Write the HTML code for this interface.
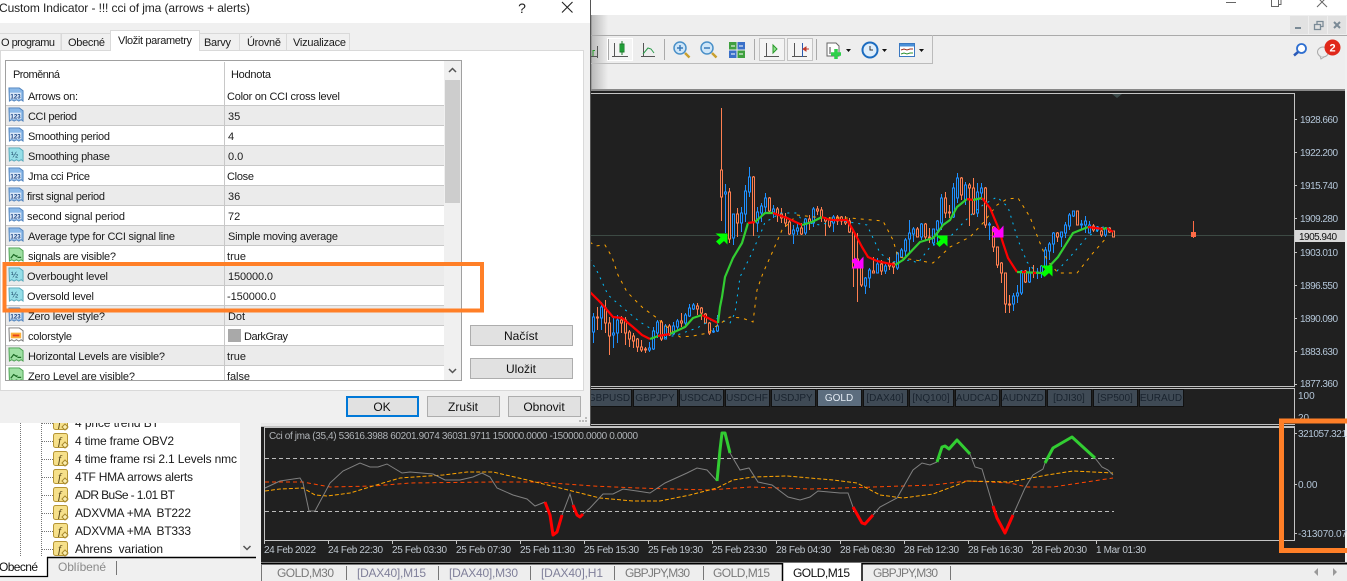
<!DOCTYPE html>
<html><head><meta charset="utf-8"><title>Custom Indicator</title>
<style>
html,body{margin:0;padding:0;background:#fff;width:1347px;height:581px;overflow:hidden}
svg{display:block;font-family:"Liberation Sans",sans-serif}
.d{font-size:11px;fill:#1a1a1a}
.ax{font-size:10px;fill:#b4c6d8}
.dt{font-size:10px;fill:#c0c8d0}
.tb{font-size:12px;fill:#7a7a7a}
.tx{font-size:10px;fill:#19232e;text-anchor:middle}
.tr{font-size:12px;fill:#1a1a1a;white-space:pre}
.btn{fill:#e1e1e1;stroke:#adadad}
.bt{font-size:12px;fill:#111;text-anchor:middle}
</style></head><body>
<svg width="1347" height="581" viewBox="0 0 1347 581" xmlns="http://www.w3.org/2000/svg">
<defs>
<linearGradient id="sh" x1="0" x2="1" y1="0" y2="0"><stop offset="0" stop-color="#555"/><stop offset=".12" stop-color="#bbb"/><stop offset="1" stop-color="#bbb" stop-opacity="0"/></linearGradient>
<symbol id="i123" viewBox="0 0 17 17"><path d="M1 1h11l4 3v11l-2-1.500-2.500 1.500-2.500-1.500-2.500 1.500-2.500-1.500-2.500 1.500z" fill="#8ab8e8" stroke="#4f82bc"/><rect x="2" y="6" width="12" height="7" fill="#dbe8f7"/><text x="8" y="12" font-size="6.500" font-weight="bold" fill="#143e80" text-anchor="middle">123</text></symbol>
<symbol id="i12" viewBox="0 0 17 17"><path d="M1 1h11l4 3v11l-2-1.500-2.500 1.500-2.500-1.500-2.500 1.500-2.500-1.500-2.500 1.500z" fill="#96dee8" stroke="#55a8ba"/><text x="7" y="11" font-size="9" fill="#1f4a6a" text-anchor="middle">½</text></symbol>
<symbol id="ib" viewBox="0 0 17 17"><path d="M1 1h11l4 3v11l-2-1.500-2.500 1.500-2.500-1.500-2.500 1.500-2.500-1.500-2.500 1.500z" fill="#9fe0a4" stroke="#4aa050"/><path d="M3 12l3-4 3 2 1-1M10 11h4" fill="none" stroke="#1d6a25" stroke-width="1.300"/></symbol>
<symbol id="ic" viewBox="0 0 17 17"><path d="M1 1h11l4 3v11l-2-1.500-2.500 1.500-2.500-1.500-2.500 1.500-2.500-1.500-2.500 1.500z" fill="#fff" stroke="#777"/><rect x="3" y="6" width="11" height="6" fill="#fbb03b"/><rect x="5" y="8" width="7" height="2" fill="#e8401c"/></symbol>
<symbol id="fx" viewBox="0 0 16 16"><rect x=".5" y=".5" width="14" height="14" rx="2" fill="#f6e08a" stroke="#b59535"/><text x="6.500" y="11.500" font-size="11" font-style="italic" font-family="Liberation Serif" fill="#4a3a10" text-anchor="middle">f</text><path d="M12 9l3 3-3 3-3-3z" fill="#fbeeb0" stroke="#a88a2c"/></symbol>
</defs>

<!-- app background -->
<rect width="1347" height="581" fill="#fff"/>
<rect x="590" y="15" width="757" height="75" fill="#eee"/>
<rect x="590" y="15" width="18" height="75" fill="url(#sh)"/>
<path d="M590 35.500H1347" stroke="#aaa"/>
<path d="M1226 2.500h10M1271.500 0v6.500h7V0M1278.500 4.500h2.500V0" fill="none" stroke="#666"/>
<path d="M1319-1l8 8M1325-1l-8 8" fill="none" stroke="#666"/>
<rect x="1290" y="16" width="18" height="18" fill="#e2e2e2"/><rect x="1309" y="16" width="18" height="18" fill="#e2e2e2"/><rect x="1328" y="16" width="18" height="18" fill="#e2e2e2"/>
<path d="M1295 28h6" stroke="#7a8a96" stroke-width="2"/>
<path d="M1314.500 24.500h6v5h-6zM1317 24v-2.500h6v5h-2.500" fill="none" stroke="#7a8a96" stroke-width="1.300"/>
<path d="M1334 22l6 6M1340 22l-6 6" stroke="#7a8a96" stroke-width="2"/>
<!-- toolbar -->
<path d="M590 63.500H932.500V35" fill="none" stroke="#bbb"/>
<rect x="607.500" y="38.500" width="25" height="22" fill="#f4f4f4" stroke="#fff"/>
<rect x="759.500" y="38.500" width="25" height="22" fill="#f4f4f4" stroke="#c4c4c4"/>
<rect x="787.500" y="38.500" width="25" height="22" fill="#f4f4f4" stroke="#c4c4c4"/>
<path d="M664.500 39V60M754.500 39V60M816.500 39V60M608.500 39V60" stroke="#aaa"/>
<path d="M590 56.500h3v-6h2" fill="none" stroke="#2a9a2a"/><path d="M590 56.500h8M597.500 46v12" fill="none" stroke="#555"/>
<g fill="none" stroke="#555">
<path d="M614.500 43V57M612 56.500H628"/><path d="M643.500 43V57M641 56.500H655"/>
<path d="M766.500 43V57M764 56.500H779"/><path d="M794.500 43V57M792 56.500H807"/><path d="M802.500 43V57" stroke="#2a5ab0"/>
</g>
<rect x="620" y="44" width="4" height="8" fill="#27c044" stroke="#1a7a2a"/><path d="M622 41v14" stroke="#1a7a2a"/>
<path d="M643 54l5-6 3 1 3 4" fill="none" stroke="#2a9a4a"/>
<path d="M773 45v8l4-4z" fill="#8fe08f" stroke="#2a9a2a"/>
<path d="M809 49h-4M803 49l3-2v4z" fill="#c0392b" stroke="#c0392b"/>
<g>
<circle cx="680" cy="48" r="6" fill="#cfe6f8" stroke="#4a90c8" stroke-width="1.500"/><path d="M677 48h6M680 45v6" stroke="#3a7ab8" stroke-width="1.500"/><path d="M685 53l4.500 4.500" stroke="#c8a030" stroke-width="2.500"/>
<circle cx="707" cy="48" r="6" fill="#cfe6f8" stroke="#4a90c8" stroke-width="1.500"/><path d="M704 48h6" stroke="#3a7ab8" stroke-width="1.500"/><path d="M712 53l4.500 4.500" stroke="#c8a030" stroke-width="2.500"/>
<rect x="729" y="42" width="7.500" height="7.500" fill="#3fa03f"/><rect x="737.500" y="42" width="7.500" height="7.500" fill="#3a70c8"/><rect x="729" y="50.500" width="7.500" height="7.500" fill="#3a70c8"/><rect x="737.500" y="50.500" width="7.500" height="7.500" fill="#3fa03f"/>
<path d="M731 46h4M739 46h4M731 54h4M739 54h4" stroke="#fff"/>
</g>
<path d="M827 43h9l3 3v10h-12z" fill="#fff" stroke="#666"/><path d="M830 47v7" stroke="#444"/><path d="M836 49v10M831 54h10" stroke="#2ed04a" stroke-width="3.500"/>
<circle cx="870" cy="50" r="7.500" fill="#dfeefb" stroke="#1c6cc0" stroke-width="2"/><path d="M870 46v4h3" fill="none" stroke="#333"/>
<rect x="899.500" y="43.500" width="15" height="13" fill="#fff" stroke="#3a78c0"/><rect x="900" y="44" width="14" height="2.500" fill="#4a90d8"/><path d="M901 50l3-1 3 1 3-1 3 0" fill="none" stroke="#a03020"/><path d="M901 54l3-1 3 1 3-1 3 0" fill="none" stroke="#309030"/>
<path d="M846 49h5l-2.500 3zM882 49h5l-2.500 3zM919 49h5l-2.500 3z" fill="#111"/>
<!-- search and chat -->
<circle cx="1301.500" cy="48.500" r="4.500" fill="#fff" stroke="#2f6fd0" stroke-width="1.800"/><path d="M1298 52l-4 3.500" stroke="#2a5ab8" stroke-width="2.500"/>
<ellipse cx="1323" cy="52" rx="5.500" ry="5" fill="#eee" stroke="#aaa"/><path d="M1320 56l1 3 3-2" fill="#ddd" stroke="#aaa"/>
<circle cx="1332.500" cy="47.500" r="8" fill="#e0281a"/><text x="1332.500" y="51.500" font-size="11" font-weight="bold" fill="#fff" text-anchor="middle">2</text>

<!-- chart area -->
<rect x="590" y="91" width="755" height="2" fill="#202020"/>
<rect x="261" y="93" width="1084" height="469" fill="#202020"/>
<rect x="1345" y="36" width="2" height="527" fill="#f0f0f0"/>
<rect x="590" y="89" width="755" height="2" fill="#888"/>
<path d="M590 93.500H1294.500V387" fill="none" stroke="#c4c4c4"/>
<path d="M1112 94h10l-5 4z" fill="#3c4a4a"/>
<path d="M590 386.500H1295M590 388.500H1295M590 424.500H1295" stroke="#c0c0c0"/>
<path d="M261 426.500H1295" stroke="#c0c0c0"/>
<path d="M264.500 427.500H1294.500V540.500H264.500z" fill="none" stroke="#c4c4c4"/>
<path d="M1294.500 389V423" stroke="#c4c4c4"/>
<path d="M590 235.500H1294" stroke="#3d4a44"/>
<!-- price axis -->
<path d="M1294 119.500h3M1294 152.500h3M1294 185.500h3M1294 218.500h3M1294 252.500h3M1294 285.500h3M1294 318.500h3M1294 351.500h3M1294 384.500h3M1294 433.500h3M1294 484.500h3M1294 533.500h3" stroke="#c4c4c4"/>
<g class="ax">
<text class="ax" x="1300" y="123" textLength="38">1928.660</text>
<text class="ax" x="1300" y="156" textLength="38">1922.200</text>
<text class="ax" x="1300" y="189" textLength="38">1915.740</text>
<text class="ax" x="1300" y="222" textLength="38">1909.280</text>
<text class="ax" x="1300" y="256" textLength="38">1903.010</text>
<text class="ax" x="1300" y="289" textLength="38">1896.550</text>
<text class="ax" x="1300" y="322" textLength="38">1890.090</text>
<text class="ax" x="1300" y="355" textLength="38">1883.630</text>
<text class="ax" x="1300" y="387" textLength="38">1877.360</text>
<text class="ax" x="1298" y="399">100</text>
<text class="ax" x="1298" y="421">20</text>
<text class="ax" x="1298" y="437" textLength="49">321057.321</text>
<text class="ax" x="1298" y="488">0.00</text>
<text class="ax" x="1298" y="537" textLength="49">-313070.07</text>
</g>
<rect x="1295" y="230" width="50" height="12" fill="#d8d8d8"/>
<text x="1299" y="240" font-size="10" fill="#111" textLength="38">1905.940</text>

<!-- candles -->
<g fill="#202020" shape-rendering="crispEdges">
<path fill="none" stroke="#1e90ff" d="M593.500 313V343M601.500 302V330M613.500 317V348M617.500 315V343M649.500 342V352M653.500 327V350M657.500 320V338M665.500 324V339M673.500 322V335M677.500 319V330M685.500 313V325M689.500 304V317M693.500 303V310M713.500 328V333M717.500 315V332M725.500 184V233M733.500 214V245M741.500 207V232M745.500 185V222M749.500 167V197M757.500 207V232M761.500 203V222M765.500 193V213M773.500 205V218M793.500 225V244M797.500 223V235M805.500 218V235M813.500 207V227M833.500 215V232M865.500 277V294M869.500 268V288M877.500 258V273M885.500 263V274M897.500 252V270M901.500 248V258M905.500 238V257M909.500 220V252M913.500 227V242M921.500 223V240M933.500 229V245M937.500 220V243M941.500 194V230M953.500 183V218M957.500 173V203M965.500 182V205M977.500 183V217M981.500 183V200M989.500 222V240M1013.500 293V311M1017.500 285V303M1021.500 270V295M1029.500 267V283M1037.500 268V279M1041.500 265V278M1045.500 247V272M1049.500 242V260M1053.500 232V253M1061.500 232V247M1065.500 222V238M1069.500 213V230M1073.500 211V217M1081.500 220V230M1085.500 216V233M1089.500 221V233M1097.500 226V232M1105.500 227V237"/>
<path stroke="#1e90ff" d="M592.500 317h2V332h-2zM600.500 307h2V318h-2zM612.500 333h2V335h-2zM616.500 320h2V333h-2zM648.500 348h2V350h-2zM652.500 331h2V349h-2zM656.500 322h2V333h-2zM664.500 326h2V339h-2zM672.500 326h2V334h-2zM676.500 321h2V327h-2zM684.500 315h2V323h-2zM688.500 308h2V316h-2zM692.500 305h2V309h-2zM712.500 331h2V332h-2zM716.500 326h2V331h-2zM724.500 192h2V194h-2zM732.500 214h2V238h-2zM740.500 213h2V223h-2zM744.500 191h2V214h-2zM748.500 177h2V192h-2zM756.500 212h2V223h-2zM760.500 206h2V213h-2zM764.500 198h2V207h-2zM772.500 209h2V212h-2zM792.500 230h2V234h-2zM796.500 228h2V231h-2zM804.500 219h2V233h-2zM812.500 209h2V223h-2zM832.500 217h2V223h-2zM864.500 278h2V286h-2zM868.500 270h2V278h-2zM876.500 264h2V273h-2zM884.500 266h2V271h-2zM896.500 253h2V268h-2zM900.500 250h2V257h-2zM904.500 240h2V251h-2zM908.500 233h2V239h-2zM912.500 229h2V234h-2zM920.500 224h2V237h-2zM932.500 229h2V243h-2zM936.500 221h2V230h-2zM940.500 198h2V223h-2zM952.500 188h2V217h-2zM956.500 178h2V198h-2zM964.500 185h2V200h-2zM976.500 192h2V213h-2zM980.500 188h2V193h-2zM988.500 224h2V225h-2zM1012.500 296h2V304h-2zM1016.500 293h2V296h-2zM1020.500 271h2V293h-2zM1028.500 273h2V282h-2zM1036.500 272h2V273h-2zM1040.500 266h2V273h-2zM1044.500 250h2V267h-2zM1048.500 244h2V251h-2zM1052.500 233h2V244h-2zM1060.500 232h2V237h-2zM1064.500 225h2V233h-2zM1068.500 215h2V226h-2zM1072.500 211h2V216h-2zM1080.500 224h2V225h-2zM1084.500 221h2V225h-2zM1088.500 225h2V233h-2zM1096.500 227h2V230h-2zM1104.500 228h2V235h-2z"/>
<path fill="none" stroke="#ff7f50" d="M597.500 307V330M605.500 300V333M609.500 317V355M621.500 316V333M625.500 317V345M629.500 330V347M633.500 333V348M637.500 338V352M641.500 340V352M645.500 347V353M661.500 320V341M669.500 324V336M681.500 313V327M697.500 303V315M701.500 307V320M705.500 313V323M709.500 322V335M721.500 108V221M729.500 188V243M737.500 208V237M753.500 176V236M769.500 197V213M777.500 207V222M781.500 208V223M785.500 213V227M789.500 220V235M801.500 223V235M809.500 215V230M817.500 206V215M821.500 207V222M825.500 217V236M829.500 217V228M837.500 215V225M841.500 216V225M845.500 216V225M849.500 218V233M853.500 232V287M857.500 233V302M861.500 268V287M873.500 257V273M881.500 260V275M889.500 257V270M893.500 262V274M917.500 227V237M925.500 223V240M929.500 228V243M945.500 192V218M949.500 205V218M961.500 177V200M969.500 183V226M973.500 178V215M985.500 187V228M993.500 226V252M997.500 247V268M1001.500 262V283M1005.500 273V313M1009.500 295V313M1025.500 270V283M1033.500 265V278M1057.500 232V242M1077.500 211V225M1093.500 224V232M1101.500 227V237M1109.500 227V233M1113.500 231V237"/>
<path stroke="#ff7f50" d="M596.500 317h2V318h-2zM604.500 308h2V323h-2zM608.500 323h2V336h-2zM620.500 320h2V323h-2zM624.500 320h2V333h-2zM628.500 332h2V339h-2zM632.500 336h2V341h-2zM636.500 339h2V347h-2zM640.500 347h2V350h-2zM644.500 349h2V350h-2zM660.500 322h2V339h-2zM668.500 326h2V335h-2zM680.500 321h2V323h-2zM696.500 306h2V309h-2zM700.500 308h2V313h-2zM704.500 314h2V323h-2zM708.500 323h2V333h-2zM720.500 170h2V197h-2zM728.500 192h2V239h-2zM736.500 214h2V223h-2zM752.500 177h2V222h-2zM768.500 198h2V211h-2zM776.500 209h2V215h-2zM780.500 214h2V218h-2zM784.500 217h2V223h-2zM788.500 222h2V234h-2zM800.500 228h2V234h-2zM808.500 219h2V222h-2zM816.500 209h2V211h-2zM820.500 210h2V218h-2zM824.500 218h2V221h-2zM828.500 220h2V226h-2zM836.500 217h2V221h-2zM840.500 217h2V221h-2zM844.500 220h2V223h-2zM848.500 221h2V232h-2zM852.500 232h2V268h-2zM856.500 259h2V267h-2zM860.500 268h2V285h-2zM872.500 271h2V273h-2zM880.500 264h2V271h-2zM888.500 264h2V266h-2zM892.500 263h2V267h-2zM916.500 229h2V237h-2zM924.500 224h2V237h-2zM928.500 237h2V238h-2zM944.500 198h2V213h-2zM948.500 212h2V213h-2zM960.500 178h2V195h-2zM968.500 185h2V188h-2zM972.500 188h2V214h-2zM984.500 188h2V225h-2zM992.500 227h2V247h-2zM996.500 247h2V265h-2zM1000.500 263h2V273h-2zM1004.500 273h2V304h-2zM1008.500 304h2V305h-2zM1024.500 271h2V282h-2zM1032.500 272h2V273h-2zM1056.500 233h2V237h-2zM1076.500 211h2V225h-2zM1092.500 226h2V230h-2zM1100.500 231h2V235h-2zM1108.500 228h2V232h-2zM1112.500 231h2V237h-2z"/>
<path fill="none" stroke="#ff6a45" d="M1193.500 221V238"/><rect x="1191" y="232" width="5" height="5" fill="#ff6a45" stroke="none"/>
</g>
<!-- MA envelopes -->
<g fill="none">
<polyline stroke="#00bfff" stroke-dasharray="2 5" points="590,259 598,273 608,295 623,308 640,322 653,330 657,333 663,338 677,335 697,328 715,318 730,323 735,313 740,277 750,257 762,230 765,222 773,218 780,213 797,213 803,222 820,225 837,220 867,225 880,253 892,262 910,260 918,263 930,247 950,237 963,223 973,213 983,205 997,197 1008,207 1018,240 1027,262 1037,273 1057,271 1070,257 1087,237 1103,227 1110,228"/>
<polyline stroke="#ffa500" stroke-dasharray="3 5" points="590,242 595,246 605,245 612,257 618,275 627,292 643,308 657,318 667,327 680,337 693,336 708,333 715,327 730,317 742,318 753,322 757,290 763,273 772,253 782,230 797,215 823,218 850,218 883,221 893,240 898,257 915,260 933,263 950,247 970,237 983,223 997,205 1007,199 1018,198 1030,217 1038,238 1047,260 1058,273 1077,273 1093,253 1107,237"/>
<g stroke-width="2.200" stroke-linejoin="round">
<polyline stroke="#f00" points="590,292 600,302 607,310 613,317 622,318 633,327 642,335 650,339"/>
<polyline stroke="#32cd32" points="650,339 658,336"/><polyline stroke="#f00" points="658,336 670,334"/>
<polyline stroke="#32cd32" points="670,334 685,327 693,318 702,315"/><polyline stroke="#f00" points="702,315 718,323"/>
<polyline stroke="#32cd32" points="718,323 720,307 722,297 725,277 733,258 742,243 748,223"/><polyline stroke="#f00" points="748,223 755,222"/>
<polyline stroke="#32cd32" points="755,222 765,213 773,213"/><polyline stroke="#f00" points="773,213 787,218 802,225"/>
<polyline stroke="#32cd32" points="802,225 812,222 822,217"/><polyline stroke="#f00" points="822,217 830,220 847,220 853,230 862,247 868,257 877,261 895,265"/>
<polyline stroke="#32cd32" points="895,265 903,260 920,242 930,239 933,238 938,232 943,225 950,220 957,207 967,199"/><polyline stroke="#f00" points="967,199 973,200"/>
<polyline stroke="#32cd32" points="973,200 982,198"/><polyline stroke="#f00" points="982,198 990,208 998,227 1003,243 1008,258 1017,272"/>
<polyline stroke="#32cd32" points="1017,272 1043,273"/><path stroke="#f00" d="M1022 272h4M1033 273h3"/>
<polyline stroke="#32cd32" points="1043,273 1058,257 1073,233 1088,227"/><polyline stroke="#f00" points="1088,227 1103,229"/>
<polyline stroke="#32cd32" points="1103,229 1107,228"/><polyline stroke="#f00" points="1107,228 1113,232"/>
</g>
</g>
<!-- arrows -->
<g fill="#00ff00">
<path d="M715.500 233.500h12v11l-3.500-3.500-4.500 4-3.500-3.500 4.500-4z"/>
<path d="M935.500 235.500h12v11l-3.500-3.500-4.500 4-3.500-3.500 4.500-4z"/>
<path d="M1040.500 265.500h12v11l-3.500-3.500-4.500 4-3.500-3.500 4.500-4z"/>
</g>
<g fill="#ff00ff">
<path d="M863.500 256.500V268.500H851.500L855 265 851.500 261 855 257.500 859 261.500z"/>
<path d="M1003.500 225.500V237.500H991.500L995 234 991.500 230 995 226.500 999 230.500z"/>
</g>
<!-- symbol buttons -->
<g shape-rendering="crispEdges" stroke="#111">
<rect x="590" y="389.500" width="41.500" height="17" fill="#3f4a55"/><rect x="633.500" y="389.500" width="44" height="17" fill="#3f4a55"/><rect x="679.500" y="389.500" width="44" height="17" fill="#3f4a55"/><rect x="725.500" y="389.500" width="44" height="17" fill="#3f4a55"/><rect x="771.500" y="389.500" width="44" height="17" fill="#3f4a55"/><rect x="817.500" y="389.500" width="44" height="17" fill="#5c6d7e"/><rect x="863.500" y="389.500" width="44" height="17" fill="#3f4a55"/><rect x="909.500" y="389.500" width="44" height="17" fill="#3f4a55"/><rect x="955.500" y="389.500" width="44" height="17" fill="#3f4a55"/><rect x="1001.500" y="389.500" width="44" height="17" fill="#3f4a55"/><rect x="1047.500" y="389.500" width="44" height="17" fill="#3f4a55"/><rect x="1093.500" y="389.500" width="44" height="17" fill="#3f4a55"/><rect x="1139.500" y="389.500" width="44" height="17" fill="#3f4a55"/>
</g>
<text class="tx" x="609" y="401">GBPUSD</text><text class="tx" x="655" y="401">GBPJPY</text><text class="tx" x="701" y="401">USDCAD</text><text class="tx" x="747" y="401">USDCHF</text><text class="tx" x="793" y="401">USDJPY</text><text class="tx" x="839" y="401" style="fill:#e4ecf4">GOLD</text><text class="tx" x="885" y="401">[DAX40]</text><text class="tx" x="931" y="401">[NQ100]</text><text class="tx" x="977" y="401">AUDCAD</text><text class="tx" x="1023" y="401">AUDNZD</text><text class="tx" x="1069" y="401">[DJI30]</text><text class="tx" x="1115" y="401">[SP500]</text><text class="tx" x="1161" y="401">EURAUD</text>

<!-- subwindow -->
<text x="269" y="439" font-size="10" fill="#b0b4b8" textLength="369">Cci of jma (35,4) 53616.3988 60201.9074 36031.9711 150000.0000 -150000.0000 0.0000</text>
<g fill="none">
<path d="M265 458.500H1114M265 511.500H1114" stroke="#bcbcbc" stroke-dasharray="4 3"/>
<polyline stroke="#ff4500" stroke-dasharray="4 3" points="265,482 303,482 330,487 373,486 410,483 493,482 537,482 593,486 637,488 710,490 750,487 810,489 873,487 933,485 967,481 1010,483 1027,487 1053,487 1113,478"/>
<polyline stroke="#ffa500" stroke-dasharray="4 2" points="265,491 280,489 303,488 315,495 327,496 350,493 383,483 400,478 443,475 467,472 493,472 523,479 560,488 600,498 633,501 660,501 690,495 717,488 733,480 753,477 787,476 833,480 857,483 880,495 903,498 933,494 957,485 967,481 1010,482 1047,475 1073,471 1113,473"/>
<polyline stroke="#808080" points="265,488 280,481 300,478 303,483 309,511 315,511 330,483 343,471 360,463 370,467 378,467 387,464 402,473 410,472 433,474 445,480 460,480 473,477 482,473 490,477 497,488 513,495 527,499 535,506 545,502"/>
<polyline stroke="#808080" points="562,515 570,494 573,505"/>
<polyline stroke="#808080" points="583,514 590,508 603,494 613,494 623,489 637,491 650,493 665,483 687,473 697,468 707,470 717,481"/>
<polyline stroke="#808080" points="730,453 740,470 749,468 758,482 772,485 788,497 800,500 810,497 818,491 840,493 848,493 853,507"/>
<polyline stroke="#808080" points="873,515 880,507 897,498 913,470 922,463 930,465 937,462"/>
<polyline stroke="#808080" points="970,454 975,467 982,469 993,506"/>
<polyline stroke="#808080" points="1013,515 1025,488 1033,475 1043,469 1045,463"/>
<polyline stroke="#808080" points="1095,458 1102,467 1108,470 1113,475"/>
<g stroke-width="3" stroke-linejoin="round">
<polyline stroke="#f00" points="545,502 550,515 553,535 557,532 562,515"/>
<polyline stroke="#f00" points="573,505 577,515 580,517 583,514"/>
<polyline stroke="#32cd32" points="717,481 720,450 722,433 725,433 730,453"/>
<polyline stroke="#f00" points="853,507 862,523 865,524 873,515"/>
<polyline stroke="#32cd32" points="937,462 942,447 945,446 949,449 957,440 970,454"/>
<polyline stroke="#f00" points="993,506 997,518 1005,533 1013,515"/>
<polyline stroke="#32cd32" points="1045,463 1053,448 1072,437 1095,458"/>
</g>
</g>
<!-- time axis -->
<path d="M264.500 540v4M328.500 540v4M392.500 540v4M456.500 540v4M520.500 540v4M584.500 540v4M648.500 540v4M712.500 540v4M776.500 540v4M840.500 540v4M904.500 540v4M968.500 540v4M1032.500 540v4M1096.500 540v4" stroke="#c4c4c4"/>
<g>
<text class="dt" x="264" y="553" textLength="52">24 Feb 2022</text>
<text class="dt" x="328" y="553" textLength="55">24 Feb 22:30</text>
<text class="dt" x="392" y="553" textLength="55">25 Feb 03:30</text>
<text class="dt" x="456" y="553" textLength="55">25 Feb 07:30</text>
<text class="dt" x="520" y="553" textLength="55">25 Feb 11:30</text>
<text class="dt" x="584" y="553" textLength="55">25 Feb 15:30</text>
<text class="dt" x="648" y="553" textLength="55">25 Feb 19:30</text>
<text class="dt" x="712" y="553" textLength="55">25 Feb 23:30</text>
<text class="dt" x="776" y="553" textLength="55">28 Feb 04:30</text>
<text class="dt" x="840" y="553" textLength="55">28 Feb 08:30</text>
<text class="dt" x="904" y="553" textLength="55">28 Feb 12:30</text>
<text class="dt" x="968" y="553" textLength="55">28 Feb 16:30</text>
<text class="dt" x="1032" y="553" textLength="55">28 Feb 20:30</text>
<text class="dt" x="1096" y="553" textLength="50">1 Mar 01:30</text>
</g>
<!-- bottom chart tabs -->
<rect x="261" y="562" width="1086" height="19" fill="#eee"/>
<path d="M261 563.500H1347" stroke="#000" stroke-width="2"/>
<rect x="783" y="563" width="79" height="18" fill="#fff"/>
<path d="M782.500 563V581M862 563V581" stroke="#000" stroke-width="1.500"/>
<path d="M261.500 564V581M346.500 566V580M438.500 566V580M530.500 566V580M614.500 566V580M703.500 566V580M950.500 566V580" stroke="#777"/>
<text class="tb" x="277" y="577" textLength="57">GOLD,M30</text>
<text class="tb" x="357" y="577" textLength="69" style="fill:#80809a">[DAX40],M15</text>
<text class="tb" x="449" y="577" textLength="69" style="fill:#80809a">[DAX40],M30</text>
<text class="tb" x="541" y="577" textLength="62" style="fill:#80809a">[DAX40],H1</text>
<text class="tb" x="625" y="577" textLength="65">GBPJPY,M30</text>
<text class="tb" x="713" y="577" textLength="57">GOLD,M15</text>
<text class="tb" x="793" y="577" textLength="57" style="fill:#111">GOLD,M15</text>
<text class="tb" x="873" y="577" textLength="65">GBPJPY,M30</text>
<path d="M1318 568v8l-4-4zM1333 568v8l4-4z" fill="#999"/>

<!-- navigator tree -->
<rect x="0" y="423" width="261" height="158" fill="#f0f0f0"/>
<rect x="0" y="423" width="240" height="134" fill="#fff"/>
<path d="M20.500 423V557M41.500 423V557" stroke="#777" stroke-dasharray="1 1"/>
<path d="M42 423.500h11M42 441.500h11M42 459.500h11M42 477.500h11M42 495.500h11M42 513.500h11M42 531.500h11M42 549.500h11" stroke="#777" stroke-dasharray="1 1"/>
<use href="#fx" x="53" y="415" width="16" height="16"/>
<use href="#fx" x="53" y="433" width="16" height="16"/><use href="#fx" x="53" y="451" width="16" height="16"/><use href="#fx" x="53" y="469" width="16" height="16"/><use href="#fx" x="53" y="487" width="16" height="16"/><use href="#fx" x="53" y="505" width="16" height="16"/><use href="#fx" x="53" y="523" width="16" height="16"/><use href="#fx" x="53" y="541" width="16" height="16"/>
<text class="tr" x="75" y="427" textLength="84">4 price trend BT</text>
<text class="tr" x="75" y="445" textLength="99">4 time frame OBV2</text>
<text class="tr" x="75" y="463" textLength="162">4 time frame rsi 2.1 Levels nmc</text>
<text class="tr" x="75" y="481" textLength="118">4TF HMA arrows alerts</text>
<text class="tr" x="75" y="499" textLength="100">ADR BuSe - 1.01 BT</text>
<text class="tr" x="75" y="517" textLength="116">ADXVMA +MA  BT222</text>
<text class="tr" x="75" y="535" textLength="116">ADXVMA +MA  BT333</text>
<text class="tr" x="75" y="553" textLength="88">Ahrens  variation</text>
<path d="M243.500 546l3.500 3.500 3.500-3.500" fill="none" stroke="#555" stroke-width="1.500"/>
<path d="M47 557.500H256" stroke="#000" stroke-width="1.500"/>
<rect x="0" y="557" width="47" height="20" fill="#fff"/>
<path d="M0 576.500H47.500V557" fill="none" stroke="#000" stroke-width="1.300"/>
<text x="-1" y="571" font-size="12" fill="#111" textLength="39">Obecné</text>
<text x="58" y="571" font-size="12" fill="#8a8a8a" textLength="48">Oblíbené</text>
<path d="M116.500 561V575" stroke="#777"/>

<!-- dialog -->
<rect x="0" y="0" width="590" height="423" fill="#f0f0f0"/>
<rect x="261" y="423" width="329" height="3" fill="#e8e8e8"/>
<rect x="0" y="0" width="590" height="23" fill="#fff"/>
<path d="M590.500 0V426" stroke="#555"/>
<text x="-1" y="12" font-size="12" fill="#222" textLength="251">Custom Indicator - !!! cci of jma (arrows + alerts)</text>
<text x="522" y="13" font-size="14" fill="#222" text-anchor="middle">?</text>
<path d="M562 2l10.500 10.500M572.500 2L562 12.500" stroke="#222" stroke-width="1.100" fill="none"/>
<!-- tab panel -->
<rect x="0.500" y="50.500" width="583" height="340" fill="#fff" stroke="#d9d9d9"/>
<g fill="#f0f0f0" stroke="#d9d9d9">
<rect x="-1" y="33.500" width="62" height="17"/><rect x="61.500" y="33.500" width="49" height="17"/><rect x="199.500" y="33.500" width="40" height="17"/><rect x="239.500" y="33.500" width="47" height="17"/><rect x="286.500" y="33.500" width="63" height="17"/>
</g>
<path d="M110.500 51V30.500H199.500V51" fill="#fff" stroke="#d9d9d9"/>
<rect x="111" y="48" width="88" height="4" fill="#fff"/>
<g class="d">
<text class="d" x="1" y="46" textLength="54">O programu</text>
<text class="d" x="68" y="46" textLength="37">Obecné</text>
<text class="d" x="118" y="44" textLength="74">Vložit parametry</text>
<text class="d" x="204" y="46" textLength="27">Barvy</text>
<text class="d" x="247" y="46" textLength="34">Úrovně</text>
<text class="d" x="293" y="46" textLength="53">Vizualizace</text>
</g>
<!-- grid -->
<rect x="5.500" y="60.500" width="456" height="320" fill="#fff" stroke="#a0a0a0"/>
<rect x="6" y="61" width="438" height="319" fill="#fff"/>
<g fill="#ebebeb"><rect x="6" y="106" width="438" height="20"/><rect x="6" y="146" width="438" height="20"/><rect x="6" y="186" width="438" height="20"/><rect x="6" y="226" width="438" height="20"/><rect x="6" y="266" width="438" height="20"/><rect x="6" y="306" width="438" height="20"/><rect x="6" y="346" width="438" height="20"/></g>
<path d="M6 105.500H444M6 125.500H444M6 145.500H444M6 165.500H444M6 185.500H444M6 205.500H444M6 225.500H444M6 245.500H444M6 265.500H444M6 285.500H444M6 305.500H444M6 325.500H444M6 345.500H444M6 365.500H444M224.500 62V380" stroke="#c8c8c8"/>
<rect x="444" y="61" width="17" height="319" fill="#f0f0f0"/>
<rect x="445" y="80" width="15" height="123" fill="#cdcdcd"/>
<path d="M449 72l3.500-3.500 3.500 3.500M449 369l3.500 3.500 3.500-3.500" fill="none" stroke="#555" stroke-width="1.500"/>
<text class="d" x="13" y="78" textLength="47">Proměnná</text>
<text class="d" x="231" y="78" textLength="40">Hodnota</text>
<use href="#i123" x="8" y="87" width="16" height="16"/><use href="#i123" x="8" y="107" width="16" height="16"/><use href="#i123" x="8" y="127" width="16" height="16"/><use href="#i12" x="8" y="147" width="16" height="16"/><use href="#i123" x="8" y="167" width="16" height="16"/><use href="#i123" x="8" y="187" width="16" height="16"/><use href="#i123" x="8" y="207" width="16" height="16"/><use href="#i123" x="8" y="227" width="16" height="16"/><use href="#ib" x="8" y="247" width="16" height="16"/><use href="#i12" x="8" y="267" width="16" height="16"/><use href="#i12" x="8" y="287" width="16" height="16"/><use href="#i123" x="8" y="307" width="16" height="16"/><use href="#ic" x="8" y="327" width="16" height="16"/><use href="#ib" x="8" y="347" width="16" height="16"/>
<svg x="8" y="367" width="16" height="13" viewBox="0 0 16 13"><use href="#ib" width="16" height="16"/></svg>
<g>
<text class="d" x="28" y="100" textLength="50">Arrows on:</text><text class="d" x="227" y="100" textLength="113">Color on CCI cross level</text>
<text class="d" x="28" y="120" textLength="49">CCI period</text><text class="d" x="228" y="120">35</text>
<text class="d" x="28" y="140" textLength="82">Smoothing period</text><text class="d" x="228" y="140">4</text>
<text class="d" x="28" y="160" textLength="82">Smoothing phase</text><text class="d" x="228" y="160">0.0</text>
<text class="d" x="28" y="180" textLength="62">Jma cci Price</text><text class="d" x="227" y="180" textLength="27">Close</text>
<text class="d" x="27" y="200" textLength="78">first signal period</text><text class="d" x="228" y="200">36</text>
<text class="d" x="27" y="220" textLength="98">second signal period</text><text class="d" x="228" y="220">72</text>
<text class="d" x="28" y="240" textLength="147">Average type for CCI signal line</text><text class="d" x="228" y="240" textLength="110">Simple moving average</text>
<text class="d" x="28" y="260" textLength="88">signals are visible?</text><text class="d" x="227" y="260" textLength="19">true</text>
<text class="d" x="27" y="280" textLength="81">Overbought level</text><text class="d" x="228" y="280" textLength="45">150000.0</text>
<text class="d" x="27" y="300" textLength="67">Oversold level</text><text class="d" x="227" y="300" textLength="49">-150000.0</text>
<text class="d" x="28" y="320" textLength="77">Zero level style?</text><text class="d" x="228" y="320" textLength="17">Dot</text>
<text class="d" x="28" y="340" textLength="44">colorstyle</text><rect x="228" y="329" width="13" height="13" fill="#a9a9a9"/><text class="d" x="244" y="340" textLength="44">DarkGray</text>
<text class="d" x="28" y="360" textLength="137">Horizontal Levels are visible?</text><text class="d" x="227" y="360" textLength="19">true</text>
<svg x="6" y="366" width="438" height="14" viewBox="6 366 438 14"><text class="d" x="28" y="380" textLength="107">Zero Level are visible?</text><text class="d" x="227" y="380" textLength="23">false</text></svg>
</g>
<!-- buttons -->
<rect class="btn" x="470.500" y="325.500" width="102" height="20"/><text class="bt" x="521" y="340">Načíst</text>
<rect class="btn" x="470.500" y="358.500" width="102" height="20"/><text class="bt" x="521" y="373">Uložit</text>
<rect x="347" y="397" width="71" height="19" fill="#e1e1e1" stroke="#0078d7" stroke-width="2"/><text class="bt" x="382" y="411">OK</text>
<rect class="btn" x="427.500" y="396.500" width="72" height="20"/><text class="bt" x="463" y="411">Zrušit</text>
<rect class="btn" x="508.500" y="396.500" width="72" height="20"/><text class="bt" x="544" y="411">Obnovit</text>
<path d="M585 417h2v2h-2zM582 420h2v2h-2zM585 420h2v2h-2zM579 420h2v2h-2z" fill="#bbb"/>

<!-- orange annotations -->
<path d="M4.500 264H482V310.500H4.500z" fill="none" stroke="#ff7f27" stroke-width="4"/>
<path d="M1347 421H1281.500V550.500H1347" fill="none" stroke="#ff7f27" stroke-width="5"/>
</svg>
</body></html>
